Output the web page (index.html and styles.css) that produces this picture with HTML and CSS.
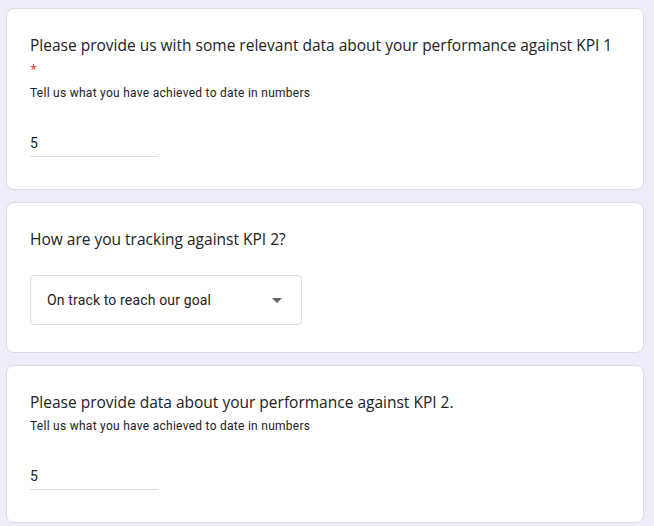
FILE: index.html
```html
<!DOCTYPE html>
<html lang="en">
<head>
<meta charset="utf-8">
<title>Form</title>
<link rel="stylesheet" href="styles.css">
</head>
<body>
<main class="form">
  <section class="card">
    <div class="title"><span class="title-text">Please provide us with some relevant data about your performance against KPI 1</span> <span class="req">*</span></div>
    <div class="help">Tell us what you have achieved to date in numbers</div>
    <div class="text-input">5</div>
  </section>
  <section class="card card-select">
    <div class="title"><span class="title-text">How are you tracking against KPI 2?</span></div>
    <div class="select">
      <span class="select-value">On track to reach our goal</span>
      <svg class="caret" width="10" height="5" viewBox="0 0 10 5"><path d="M0 0h10L5 5z" fill="#5f6368"/></svg>
    </div>
  </section>
  <section class="card">
    <div class="title"><span class="title-text">Please provide data about your performance against KPI 2.</span></div>
    <div class="help">Tell us what you have achieved to date in numbers</div>
    <div class="text-input">5</div>
  </section>
</main>
</body>
</html>
```

FILE: styles.css
```css
html, body {
  margin: 0;
  padding: 0;
  background: #f0ebf8;
}
body {
  font-family: Roboto, "Liberation Sans", sans-serif;
  color: #202124;
}
.form {
  display: flex;
  flex-direction: column;
  gap: 12px;
  padding: 8px 0 0 6px;
  width: 638px;
}
.card {
  background: #fff;
  border: 1px solid #dadce0;
  border-radius: 8px;
  padding: 24px 24px 24px 23px;
}
.title {
  font-family: "Open Sans", sans-serif;
  font-size: 15.5px;
  line-height: 24px;
  color: #202124;
}
.title-text {
  white-space: nowrap;
}
.req {
  color: #d93025;
  font-size: 13px;
  vertical-align: 1px;
}
.help {
  margin-top: 3px;
  font-size: 12px;
  line-height: 18px;
  letter-spacing: 0.27px;
  color: #202124;
}
.text-input {
  margin-top: 31px;
  margin-bottom: 8px;
  width: 128px;
  font-size: 14px;
  line-height: 20px;
  padding-bottom: 3px;
  border-bottom: 1px solid #dadce0;
}
.select {
  margin-top: 24px;
  margin-bottom: 3px;
  height: 48px;
  border: 1px solid #dadce0;
  border-radius: 4px;
  display: flex;
  align-items: center;
  justify-content: space-between;
  padding: 0 19px 0 16px;
  box-sizing: content-box;
  width: 235px;
}
.select-value {
  font-size: 14px;
  line-height: 20px;
  letter-spacing: 0.15px;
}
.caret {
  display: block;
}
```
